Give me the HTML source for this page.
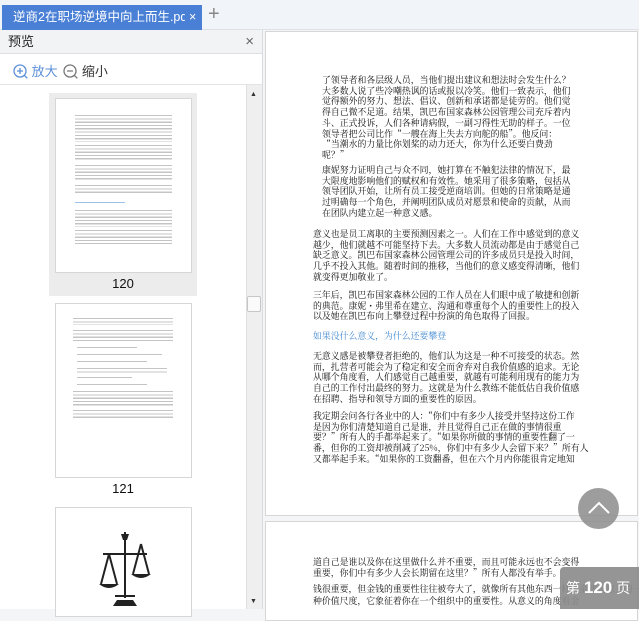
<!DOCTYPE html>
<html><head><meta charset="utf-8"><style>
*{margin:0;padding:0;box-sizing:border-box}
body{width:639px;height:609px;overflow:hidden;background:#f3f5f7;font-family:"Liberation Sans","Noto Sans CJK SC",sans-serif;position:relative}
.abs{position:absolute}
.tabbar{left:0;top:0;width:639px;height:30px;background:#f1f4f8;border-bottom:1px solid #dde1e6}
.tab{left:2px;top:5px;width:200px;height:25px;background:#4a7fd6;color:#fff;font-size:12.5px;line-height:25px;white-space:nowrap;overflow:hidden}
.side{left:0;top:30px;width:263px;height:579px;background:#fff;border-right:1px solid #d8dbe0}
.sh{left:0;top:0;width:262px;height:24px;background:#f2f3f5;border-bottom:1px solid #dcdee2;font-size:13px;line-height:24px;padding-left:8px;color:#222}
.page{background:#fff;border:1px solid #d6d6d6}
.txt{font-family:"Noto Serif CJK SC","Liberation Serif",serif;font-size:8.9px;line-height:10.7px;color:#111;white-space:nowrap}
.th{background:repeating-linear-gradient(#c4c4c4 0 1.2px,transparent 1.2px 3.3px)}
</style></head><body>
<div class="abs tabbar"></div>
<div class="abs tab"><span style="position:absolute;left:11px;top:0;width:172px;overflow:hidden">逆商2在职场逆境中向上而生.pd<span style="color:#a9c3ec">f</span></span><span style="position:absolute;left:187px;top:0">×</span></div>
<div class="abs" style="left:208px;top:3px;font-size:20px;color:#888;font-weight:300">+</div>

<div class="abs side">
 <div class="abs sh">预览<span style="position:absolute;right:8px;top:0;color:#666;font-size:15px">×</span></div>
 <div class="abs" style="left:13px;top:31px;font-size:13px;color:#5b8fd8">
  <svg width="15" height="15" style="vertical-align:-3px"><circle cx="7" cy="7" r="6" fill="none" stroke="#5b8fd8" stroke-width="1.3"/><path d="M4 7h6M7 4v6M11.3 11.3l3 3" stroke="#5b8fd8" stroke-width="1.3"/></svg> 放大
  <svg width="15" height="15" style="vertical-align:-3px;margin-left:2px"><circle cx="7" cy="7" r="6" fill="none" stroke="#777" stroke-width="1.3"/><path d="M4 7h6M11.3 11.3l3 3" stroke="#777" stroke-width="1.3"/></svg> <span style="color:#333">缩小</span>
 </div>
 <div class="abs" style="left:0;top:54px;width:262px;height:1px;background:#e2e4e8"></div>
 <div class="abs" style="left:49px;top:63px;width:148px;height:203px;background:#ececec"></div>
 <div class="abs page" style="left:55px;top:68px;width:137px;height:175px"></div>
 <div class="abs th" style="left:75px;top:85px;width:97px;height:27px"></div>
 <div class="abs th" style="left:75px;top:115px;width:97px;height:16px"></div>
 <div class="abs th" style="left:75px;top:135px;width:97px;height:16px"></div>
 <div class="abs th" style="left:75px;top:155px;width:97px;height:10px"></div>
 <div class="abs" style="left:75px;top:172px;width:50px;height:1.2px;background:#9cc0e6"></div>
 <div class="abs th" style="left:75px;top:180px;width:97px;height:17px"></div>
 <div class="abs th" style="left:75px;top:200px;width:97px;height:14px"></div>
 <div class="abs" style="left:49px;top:246px;width:148px;text-align:center;font-size:13px;color:#111">120</div>
 <div class="abs page" style="left:55px;top:273px;width:137px;height:175px"></div>
 <div class="abs th" style="left:73px;top:288px;width:100px;height:7px"></div>
 <div class="abs th" style="left:73px;top:300px;width:100px;height:13px"></div>
 <div class="abs th" style="left:77px;top:317px;width:60px;height:2px"></div>
 <div class="abs th" style="left:77px;top:324px;width:85px;height:2px"></div>
 <div class="abs th" style="left:77px;top:331px;width:70px;height:2px"></div>
 <div class="abs th" style="left:77px;top:338px;width:90px;height:5px"></div>
 <div class="abs th" style="left:77px;top:347px;width:55px;height:2px"></div>
 <div class="abs th" style="left:77px;top:354px;width:70px;height:2px"></div>
 <div class="abs th" style="left:73px;top:361px;width:100px;height:15px"></div>
 <div class="abs th" style="left:73px;top:380px;width:100px;height:8px"></div>
 <div class="abs" style="left:49px;top:451px;width:148px;text-align:center;font-size:13px;color:#111">121</div>
 <div class="abs page" style="left:55px;top:477px;width:137px;height:110px"></div>
 <svg class="abs" style="left:95px;top:500px" width="60" height="80"><path d="M30 2v66M8 24h44M14 24l-8 30M14 24l8 30M46 14l-8 30M46 14l8 30M20 66h20" stroke="#222" stroke-width="2" fill="none"/><path d="M4 54q10 8 20 0zM36 44q10 8 20 0z M22 70h16l4 6H18z M26 4h8l-2 6h-4z" fill="#222"/></svg>
 <div class="abs" style="left:246px;top:55px;width:16px;height:524px;background:#efefef;border-left:1px solid #e0e0e0"></div>
 <div class="abs" style="left:250px;top:61px;font-size:7px;color:#333">▲</div>
 <div class="abs" style="left:247px;top:266px;width:14px;height:16px;background:#fafafa;border:1px solid #c6c6c6;border-radius:2px"></div>
 <div class="abs" style="left:250px;top:568px;font-size:7px;color:#333">▼</div>
</div>

<div class="abs page" style="left:265px;top:31px;width:373px;height:485px"></div>
<div class="abs page" style="left:265px;top:521px;width:373px;height:100px"></div>

<div class="abs txt" style="left:322px;top:75px">了领导者和各层级人员，当他们提出建议和想法时会发生什么？<br>大多数人说了些冷嘲热讽的话或报以冷笑。他们一致表示，他们<br>觉得额外的努力、想法、倡议、创新和承诺都是徒劳的。他们觉<br>得自己微不足道。结果，凯巴布国家森林公园管理公司充斥着内<br>斗、正式投诉，人们各种请病假，一副习得性无助的样子。一位<br>领导者把公司比作“一艘在海上失去方向舵的船”。他反问：<br>“当潮水的力量比你划桨的动力还大，你为什么还要白费劲<br>呢？”</div>
<div class="abs txt" style="left:322px;top:165px">康妮努力证明自己与众不同，她打算在不触犯法律的情况下，最<br>大限度地影响他们的赋权和有效性。她采用了很多策略，包括从<br>领导团队开始，让所有员工接受逆商培训。但她的日常策略是通<br>过明确每一个角色，并阐明团队成员对愿景和使命的贡献，从而<br>在团队内建立起一种意义感。</div>
<div class="abs txt" style="left:313px;top:229px">意义也是员工离职的主要预测因素之一。人们在工作中感觉到的意义<br>越少，他们就越不可能坚持下去。大多数人员流动都是由于感觉自己<br>缺乏意义。凯巴布国家森林公园管理公司的许多成员只是投入时间，<br>几乎不投入其他。随着时间的推移，当他们的意义感变得清晰，他们<br>就变得更加敬业了。</div>
<div class="abs txt" style="left:313px;top:290px">三年后，凯巴布国家森林公园的工作人员在人们眼中成了敏捷和创新<br>的典范。康妮・弗里希在建立、沟通和尊重每个人的重要性上的投入<br>以及她在凯巴布向上攀登过程中扮演的角色取得了回报。</div>
<div class="abs txt" style="left:313px;top:331px;color:#3f87d0">如果没什么意义，为什么还要攀登</div>
<div class="abs txt" style="left:313px;top:351px">无意义感是被攀登者拒绝的，他们认为这是一种不可接受的状态。然<br>而，扎营者可能会为了稳定和安全而舍弃对自我价值感的追求。无论<br>从哪个角度看，人们感觉自己越重要，就越有可能利用现有的能力为<br>自己的工作付出最终的努力。这就是为什么教练不能低估自我价值感<br>在招聘、指导和领导方面的重要性的原因。</div>
<div class="abs txt" style="left:313px;top:411px">我定期会问各行各业中的人：“你们中有多少人接受并坚持这份工作<br>是因为你们清楚知道自己是谁，并且觉得自己正在做的事情很重<br>要？”所有人的手都举起来了。“如果你所做的事情的重要性翻了一<br>番，但你的工资却被削减了25%，你们中有多少人会留下来？”所有人<br>又都举起手来。“如果你的工资翻番，但在六个月内你能很肯定地知</div>
<div class="abs txt" style="left:313px;top:557px">道自己是谁以及你在这里做什么并不重要，而且可能永远也不会变得<br>重要，你们中有多少人会长期留在这里？”所有人都没有举手。</div>
<div class="abs txt" style="left:313px;top:583px;line-height:12px">钱很重要，但金钱的重要性往往被夸大了，就像所有其他东西一样，金钱是意义的一<br>种价值尺度，它象征着你在一个组织中的重要性。从意义的角度看金</div>

<div class="abs" style="left:578px;top:488px;width:41px;height:41px;border-radius:50%;background:rgba(140,140,140,.85)"></div>
<svg class="abs" style="left:586px;top:498px" width="26" height="20"><path d="M3 15L13 5l10 10" stroke="#fff" stroke-width="2" fill="none"/></svg>
<div class="abs" style="left:560px;top:567px;width:79px;height:42px;background:rgba(140,140,140,.92);border-radius:4px 0 0 0;color:#fff;font-size:14px;line-height:42px;padding-left:6px;white-space:nowrap">第 <b style="font-size:17px">120</b> 页</div>
</body></html>
